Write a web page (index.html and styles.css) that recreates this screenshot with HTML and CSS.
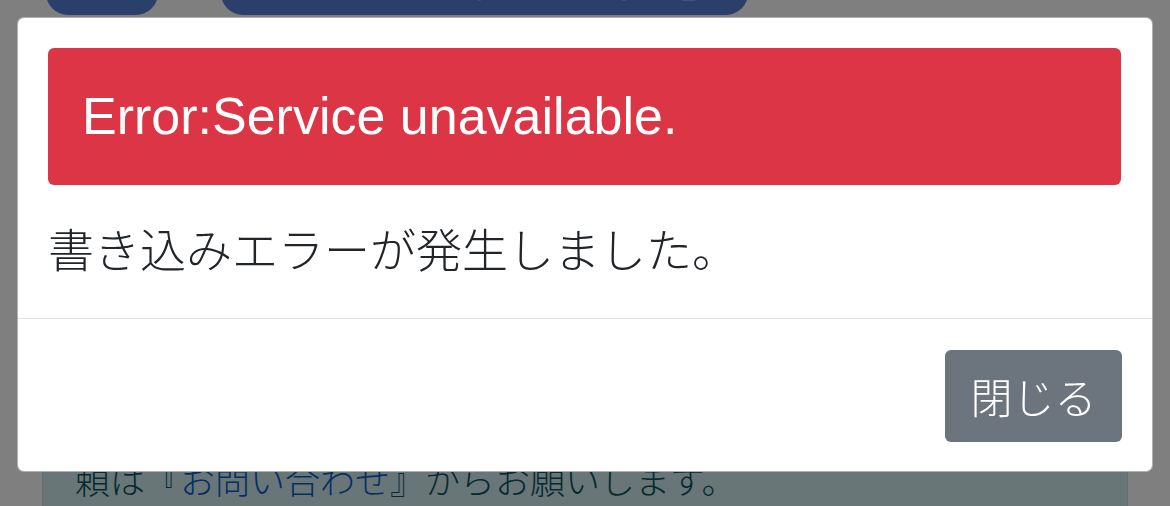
FILE: index.html
```html
<!DOCTYPE html>
<html lang="ja">
<head>
    <meta charset="UTF-8">
    <title>書き込みエラー</title>
    <link rel="stylesheet" href="styles.css">
</head>
<body>
<div class="page">
    <div class="top-nav">
        <a href="#" class="nav-btn nav-btn-small" aria-label="戻る"></a>
        <a href="#" class="nav-btn nav-btn-wide">『利用規約・注意事項』</a>
    </div>
    <div class="notice">
        ご不明な点やサービスに関するご依<br>
        頼は『<a href="#">お問い合わせ</a>』からお願いします。
    </div>
</div>

<div class="backdrop"></div>
<div class="modal">
    <div class="modal-content">
        <div class="modal-body">
            <div class="alert-danger">Error:Service unavailable.</div>
            <p class="message">書き込みエラーが発生しました。</p>
        </div>
        <div class="modal-footer">
            <button class="btn-secondary" type="button">閉じる</button>
        </div>
    </div>
</div>
</body>
</html>
```

FILE: styles.css
```css
body {
    margin: 0;
    font-family: "Liberation Sans", "Noto Sans CJK JP", sans-serif;
    background-color: white;
    color: #212529;
    overflow: hidden;
}

.page {
    padding: 0 42px;
    margin-top: -45px;
}

.top-nav {
    display: flex;
    gap: 63px;
    padding-left: 4px;
    height: 60px;
    margin-bottom: 385px;
}

.nav-btn {
    display: block;
    height: 60px;
    line-height: 60px;
    border-radius: 0 0 22px 22px;
    background-color: rgb(86, 126, 214);
    color: white;
    text-decoration: none;
    font-size: 35px;
    overflow: hidden;
}

.nav-btn-small {
    width: 112px;
}

.nav-btn-wide {
    width: 527px;
    text-align: right;
    padding-right: 32px;
    box-sizing: border-box;
}

.notice {
    background-color: #d1ecf1;
    border: 1px solid #bee5eb;
    color: #0c5460;
    font-family: "Noto Sans CJK JP", sans-serif;
    font-weight: 300;
    font-size: 35px;
    line-height: 52px;
    padding: 0 32px;
    height: 200px;
    border-radius: 6px;
}

.notice a {
    color: #0b5fc4;
    text-decoration: none;
}

.backdrop {
    position: fixed;
    inset: 0;
    background-color: rgba(0, 0, 0, 0.5);
}

.modal {
    position: fixed;
    top: 17px;
    left: 17px;
    right: 17px;
}

.modal-content {
    background-color: white;
    border: 1px solid rgba(0, 0, 0, 0.3);
    border-radius: 7px;
}

.modal-body {
    padding: 30px 31px 36px 30px;
}

.alert-danger {
    background-color: #dc3545;
    color: white;
    border-radius: 6px;
    font-size: 52px;
    line-height: 78px;
    padding: 29px 34px 30px;
    margin-bottom: 28px;
}

.message {
    margin: 0;
    font-family: "Noto Sans CJK JP", sans-serif;
    font-weight: 300;
    font-size: 46px;
    line-height: 69px;
    color: #212529;
}

.modal-footer {
    border-top: 1px solid #dee2e6;
    padding: 31px 30px 29px;
    display: flex;
    justify-content: flex-end;
}

.btn-secondary {
    background-color: #6c757d;
    color: white;
    border: none;
    border-radius: 6px;
    font-family: "Noto Sans CJK JP", sans-serif;
    font-weight: 300;
    font-size: 42px;
    line-height: 64px;
    padding: 14px 25px;
    width: 177px;
}
```
